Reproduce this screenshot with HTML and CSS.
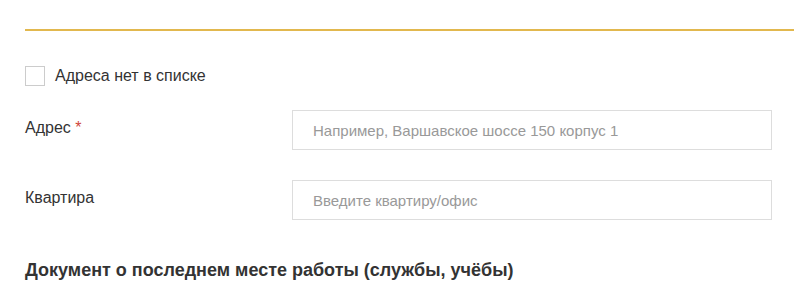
FILE: index.html
```html
<!DOCTYPE html>
<html lang="ru">
<head>
    <meta charset="UTF-8">
    <meta name="viewport" content="width=device-width, initial-scale=1.0">
    <title>Адрес</title>
    <link rel="stylesheet" href="styles.css">
</head>
<body>
    <div class="form">
        <div class="divider"></div>

        <label class="check-row">
            <input type="checkbox" class="check">
            <span class="check-box"></span>
            <span class="check-label">Адреса нет в списке</span>
        </label>

        <div class="field">
            <div class="field-label">Адрес <span class="required">*</span></div>
            <input type="text" class="field-input" placeholder="Например, Варшавское шоссе 150 корпус 1">
        </div>

        <div class="field">
            <div class="field-label">Квартира</div>
            <input type="text" class="field-input" placeholder="Введите квартиру/офис">
        </div>

        <h2 class="section-title">Документ о последнем месте работы (службы, учёбы)</h2>
    </div>
</body>
</html>
```

FILE: styles.css
```css
* {
    margin: 0;
    padding: 0;
    box-sizing: border-box;
    font-family: "Liberation Sans", Arial, sans-serif;
}

body {
    background-color: #fff;
    color: #333;
}

.form {
    padding: 29px 0 0 25px;
}

.divider {
    height: 2px;
    background-color: #e2b84e;
}

.check-row {
    display: flex;
    align-items: center;
    gap: 10px;
    margin-top: 35px;
    cursor: pointer;
}

.check {
    display: none;
}

.check-box {
    width: 20px;
    height: 20px;
    border: 1px solid #ccc;
    background-color: #fff;
}

.check-label {
    font-size: 16px;
    color: #333;
}

.field {
    display: flex;
    align-items: flex-start;
    margin-top: 24px;
}

.field + .field {
    margin-top: 30px;
}

.field-label {
    width: 267px;
    font-size: 16px;
    padding-top: 9px;
    color: #333;
}

.required {
    color: #d0453a;
}

.field-input {
    width: 480px;
    height: 40px;
    border: 1px solid #ddd;
    padding: 0 20px;
    font-size: 15px;
    color: #333;
    outline: none;
}

.field-input::placeholder {
    color: #999;
}

.section-title {
    margin-top: 40px;
    font-size: 18px;
    font-weight: bold;
    color: #333;
}
```
